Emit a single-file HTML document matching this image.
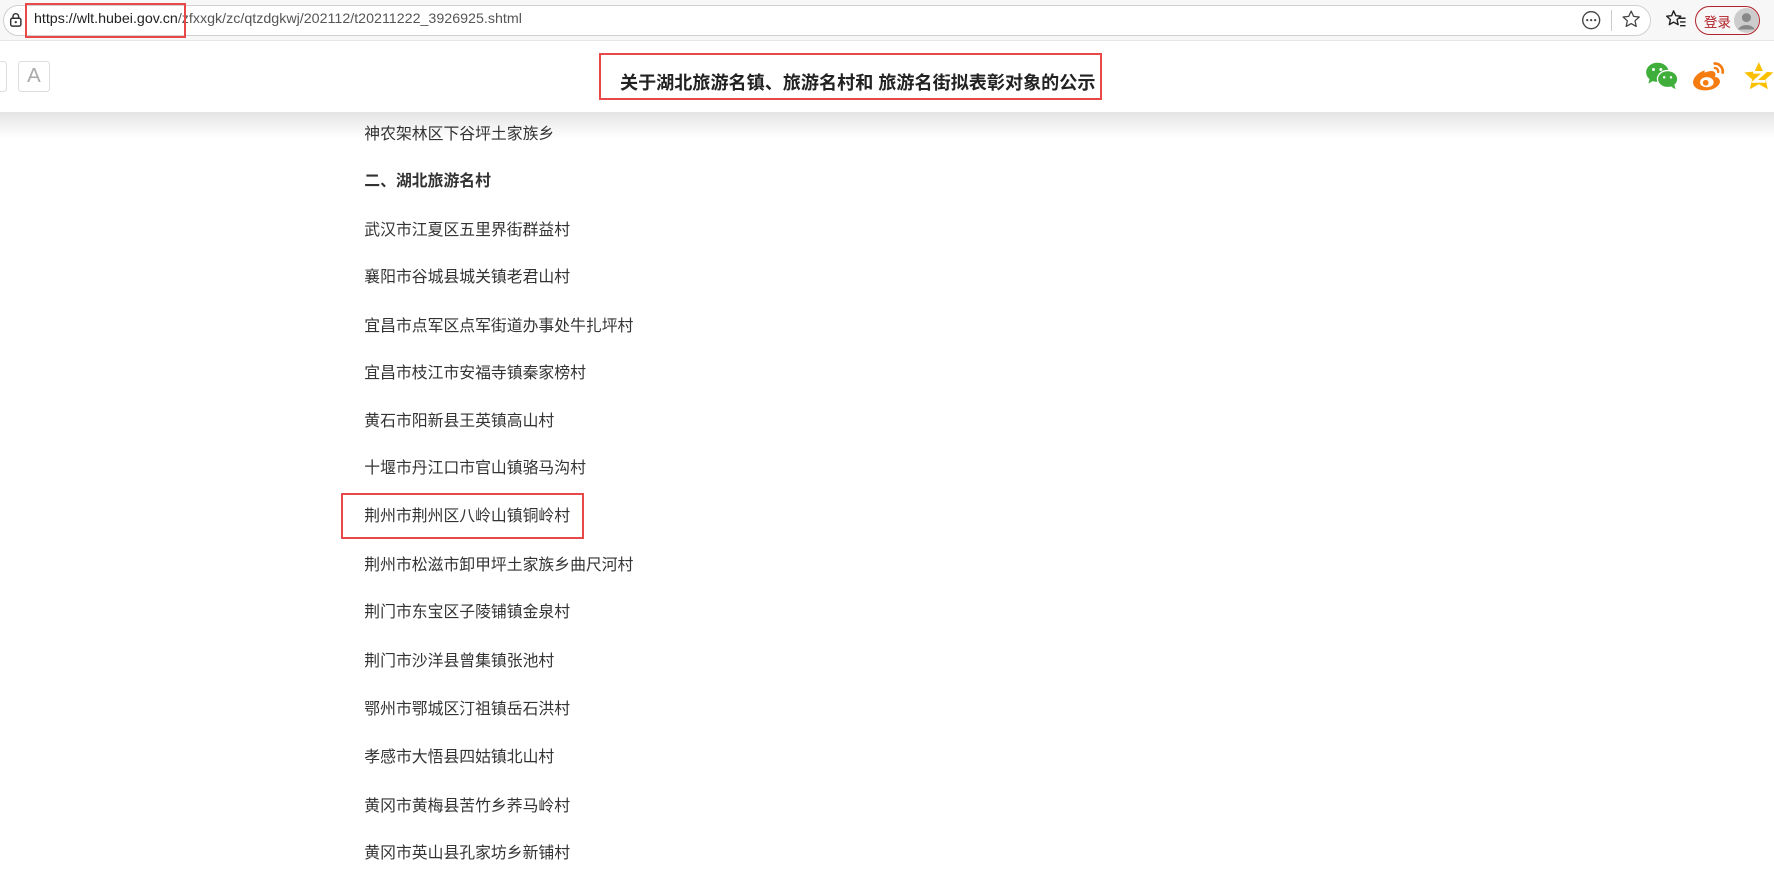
<!DOCTYPE html>
<html><head><meta charset="utf-8"><style>
*{margin:0;padding:0;box-sizing:border-box}
html,body{width:1774px;height:878px;overflow:hidden;background:#fff}
#w{width:1568px;height:776px;position:relative;zoom:1.13138;font-family:"Liberation Sans","Noto Sans CJK SC",sans-serif;color:#333}
.abs{position:absolute}
#tb{left:0;top:0;width:1568px;height:35px;background:#f7f7f7}
#addr{left:3px;top:4px;width:1456px;height:28px;border:1px solid #d0d0d0;border-radius:14px;background:#fff}
#url{left:30px;top:10px;font-size:12.6px;color:#222;white-space:nowrap}
#url span{color:#555}
.red{border:2px solid #e84848}
#hd{left:0;top:35px;width:1568px;height:64px;background:#fff;border-top:1px solid #e6e6e6}
#sh{left:0;top:99px;width:1568px;height:24px;background:linear-gradient(#e4e4e4,#fff)}
.it{position:absolute;left:322px;font-size:14px;line-height:16px;white-space:nowrap;color:#333}
</style></head><body><div id="w">
<div id="tb" class="abs"></div>
<div id="addr" class="abs"></div>
<svg class="abs" style="left:8px;top:11px" width="12" height="14" viewBox="0 0 12 14"><rect x="1.5" y="5.5" width="9" height="7" rx="1.5" fill="none" stroke="#333" stroke-width="1.3"/><path d="M3.5 5.5V4a2.5 2.5 0 0 1 5 0v1.5" fill="none" stroke="#333" stroke-width="1.3"/><circle cx="6" cy="9" r="1" fill="#333"/></svg>
<div id="url" class="abs">https://wlt.hubei.gov.cn<span>/zfxxgk/zc/qtzdgkwj/202112/t20211222_3926925.shtml</span></div>
<div class="abs red" style="left:22px;top:3px;width:142px;height:31px"></div>
<svg class="abs" style="left:1397px;top:9px" width="18" height="18" viewBox="0 0 18 18"><circle cx="9" cy="9" r="7.5" fill="none" stroke="#444" stroke-width="1.2"/><circle cx="5.5" cy="9" r="1" fill="#444"/><circle cx="9" cy="9" r="1" fill="#444"/><circle cx="12.5" cy="9" r="1" fill="#444"/></svg>
<div class="abs" style="left:1424px;top:9px;width:1px;height:18px;background:#ccc"></div>
<svg class="abs" style="left:1433px;top:8px" width="18" height="18" viewBox="0 0 24 24"><path d="M12 2.5l2.9 6.2 6.6.7-5 4.5 1.4 6.6L12 17.2l-5.9 3.3 1.4-6.6-5-4.5 6.6-.7z" fill="none" stroke="#444" stroke-width="1.5" stroke-linejoin="round"/></svg>
<svg class="abs" style="left:1472px;top:8px" width="20" height="18" viewBox="0 0 24 22"><path d="M9 2l2.4 5.2 5.4.6-4 3.7 1.2 5.4L9 14.2 4.4 16.9l1.2-5.4-4-3.7 5.4-.6z" fill="none" stroke="#222" stroke-width="1.5" stroke-linejoin="round"/><path d="M15 10h7M16 14h6M16 18h6" stroke="#222" stroke-width="1.5"/></svg>
<div class="abs" style="left:1498px;top:5px;width:58px;height:26px;border:1.3px solid #b2222a;border-radius:13px"></div>
<div class="abs" style="left:1506px;top:10px;font-size:12px;color:#b2222a">登录</div>
<svg class="abs" style="left:1533px;top:7px" width="22" height="22" viewBox="0 0 22 22"><circle cx="11" cy="11" r="11" fill="#ccc"/><circle cx="11" cy="8.5" r="4" fill="#888"/><path d="M3.5 19a8 6 0 0 1 15 0z" fill="#888"/></svg>
<div id="hd" class="abs"></div>
<div id="sh" class="abs"></div>
<div class="abs" style="left:-4px;top:54px;width:10px;height:27px;border:1px solid #ddd;border-radius:3px"></div>
<div class="abs" style="left:16px;top:54px;width:28px;height:27px;border:1px solid #ddd;border-radius:3px;font-size:18px;color:#aaa;text-align:center;line-height:25px">A</div>
<div class="abs red" style="left:529px;top:47px;width:445px;height:41px"></div>
<div class="abs" style="left:548px;top:61px;font-size:16px;font-weight:bold;color:#222;white-space:nowrap">关于湖北旅游名镇、旅游名村和 旅游名街拟表彰对象的公示</div>
<svg class="abs" style="left:1454px;top:54px" width="30" height="26" viewBox="0 0 30 26"><ellipse cx="11" cy="10" rx="10" ry="8.5" fill="#3fae3a"/><path d="M4 16l-1 4 5-3z" fill="#3fae3a"/><ellipse cx="20" cy="16" rx="9" ry="7.5" fill="#3fae3a" stroke="#fff" stroke-width="1.2"/><path d="M26 21l1 4-4-2.5z" fill="#3fae3a"/><circle cx="7.5" cy="7.5" r="1.3" fill="#fff"/><circle cx="14" cy="7.5" r="1.3" fill="#fff"/><circle cx="17" cy="14.5" r="1.1" fill="#fff"/><circle cx="23" cy="14.5" r="1.1" fill="#fff"/></svg>
<svg class="abs" style="left:1495px;top:52px" width="32" height="30" viewBox="0 0 32 30"><path d="M12 10c-6 2-11 7-10 12 1 5 9 7 16 5 6-2 9-6 7-9-1-2-3-2-4-2 1-2 1-4-1-5-2-1-5 0-8 1z" fill="#f57c10"/><ellipse cx="14" cy="20.5" rx="6" ry="4.5" fill="#fff"/><circle cx="13" cy="21" r="2.5" fill="#f57c10"/><path d="M21 4a7 7 0 0 1 7 8" fill="none" stroke="#f57c10" stroke-width="2.4" stroke-linecap="round"/><path d="M21 8a3 3 0 0 1 3 3.5" fill="none" stroke="#f57c10" stroke-width="2" stroke-linecap="round"/></svg>
<svg class="abs" style="left:1541px;top:54px" width="28" height="28" viewBox="0 0 28 28"><path d="M14 1l3.8 8.3 9 .9-6.8 6 2 8.8L14 20.5 6 25l2-8.8-6.8-6 9-.9z" fill="#fac000"/><path d="M9 10h10l-9 8h10" fill="none" stroke="#fff" stroke-width="2.4"/></svg>
<div class="it" style="top:111px">神农架林区下谷坪土家族乡</div>
<div class="it" style="top:153px;font-weight:bold">二、湖北旅游名村</div>
<div class="it" style="top:196px">武汉市江夏区五里界街群益村</div>
<div class="it" style="top:238px">襄阳市谷城县城关镇老君山村</div>
<div class="it" style="top:281px">宜昌市点军区点军街道办事处牛扎坪村</div>
<div class="it" style="top:323px">宜昌市枝江市安福寺镇秦家榜村</div>
<div class="it" style="top:365px">黄石市阳新县王英镇高山村</div>
<div class="it" style="top:407px">十堰市丹江口市官山镇骆马沟村</div>
<div class="abs red" style="left:301px;top:436px;width:215px;height:40px"></div>
<div class="it" style="top:449px">荆州市荆州区八岭山镇铜岭村</div>
<div class="it" style="top:492px">荆州市松滋市卸甲坪土家族乡曲尺河村</div>
<div class="it" style="top:534px">荆门市东宝区子陵铺镇金泉村</div>
<div class="it" style="top:577px">荆门市沙洋县曾集镇张池村</div>
<div class="it" style="top:620px">鄂州市鄂城区汀祖镇岳石洪村</div>
<div class="it" style="top:662px">孝感市大悟县四姑镇北山村</div>
<div class="it" style="top:705px">黄冈市黄梅县苦竹乡荞马岭村</div>
<div class="it" style="top:747px">黄冈市英山县孔家坊乡新铺村</div>
</div></body></html>
